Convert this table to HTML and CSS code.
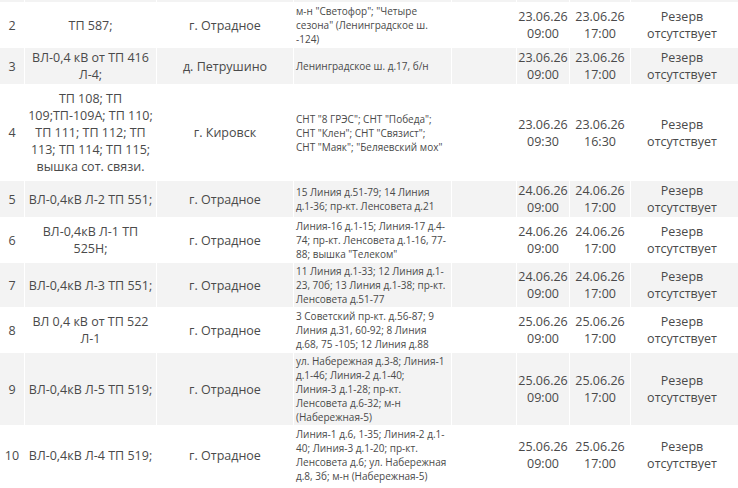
FILE: index.html
```html
<!DOCTYPE html>
<html lang="ru">
<head>
<meta charset="utf-8">
<link rel="stylesheet" href="styles.css">
</head>
<body>
<table class="grid">
  <colgroup>
    <col class="c-num"><col class="c-obj"><col class="c-loc"><col class="c-addr"><col class="c-empty"><col class="c-start"><col class="c-end"><col class="c-res">
  </colgroup>
  <tbody>
    <tr class="odd strip"><td></td><td></td><td></td><td></td><td></td><td></td><td></td><td></td></tr>
    <tr class="even">
      <td class="num">2</td>
      <td class="obj">ТП 587;</td>
      <td class="loc">г. Отрадное</td>
      <td class="addr">м-н "Светофор"; "Четыре<br>сезона" (Ленинградское ш.<br>-124)</td>
      <td></td>
      <td class="date">23.06.26<br>09:00</td>
      <td class="date">23.06.26<br>17:00</td>
      <td class="res">Резерв<br>отсутствует</td>
    </tr>
    <tr class="odd">
      <td class="num">3</td>
      <td class="obj">ВЛ-0,4 кВ от ТП 416<br>Л-4;</td>
      <td class="loc">д. Петрушино</td>
      <td class="addr">Ленинградское ш. д.17, б/н</td>
      <td></td>
      <td class="date">23.06.26<br>09:00</td>
      <td class="date">23.06.26<br>17:00</td>
      <td class="res">Резерв<br>отсутствует</td>
    </tr>
    <tr class="even tall">
      <td class="num">4</td>
      <td class="obj">ТП 108; ТП<br>109;ТП-109А; ТП 110;<br>ТП 111; ТП 112; ТП<br>113; ТП 114; ТП 115;<br>вышка сот. связи.</td>
      <td class="loc">г. Кировск</td>
      <td class="addr">СНТ "8 ГРЭС"; СНТ "Победа";<br>СНТ "Клен"; СНТ "Связист";<br>СНТ "Маяк"; "Беляевский мох"</td>
      <td></td>
      <td class="date">23.06.26<br>09:30</td>
      <td class="date">23.06.26<br>16:30</td>
      <td class="res">Резерв<br>отсутствует</td>
    </tr>
    <tr class="odd">
      <td class="num">5</td>
      <td class="obj">ВЛ-0,4кВ Л-2 ТП 551;</td>
      <td class="loc">г. Отрадное</td>
      <td class="addr">15 Линия д.51-79; 14 Линия<br>д.1-36; пр-кт. Ленсовета д.21</td>
      <td></td>
      <td class="date">24.06.26<br>09:00</td>
      <td class="date">24.06.26<br>17:00</td>
      <td class="res">Резерв<br>отсутствует</td>
    </tr>
    <tr class="even">
      <td class="num">6</td>
      <td class="obj">ВЛ-0,4кВ Л-1 ТП<br>525Н;</td>
      <td class="loc">г. Отрадное</td>
      <td class="addr">Линия-16 д.1-15; Линия-17 д.4-<br>74; пр-кт. Ленсовета д.1-16, 77-<br>88; вышка "Телеком"</td>
      <td></td>
      <td class="date">24.06.26<br>09:00</td>
      <td class="date">24.06.26<br>17:00</td>
      <td class="res">Резерв<br>отсутствует</td>
    </tr>
    <tr class="odd">
      <td class="num">7</td>
      <td class="obj">ВЛ-0,4кВ Л-3 ТП 551;</td>
      <td class="loc">г. Отрадное</td>
      <td class="addr">11 Линия д.1-33; 12 Линия д.1-<br>23, 70б; 13 Линия д.1-38; пр-кт.<br>Ленсовета д.51-77</td>
      <td></td>
      <td class="date">24.06.26<br>09:00</td>
      <td class="date">24.06.26<br>17:00</td>
      <td class="res">Резерв<br>отсутствует</td>
    </tr>
    <tr class="even">
      <td class="num">8</td>
      <td class="obj">ВЛ 0,4 кВ от ТП 522<br>Л-1</td>
      <td class="loc">г. Отрадное</td>
      <td class="addr">3 Советский пр-кт. д.56-87; 9<br>Линия д.31, 60-92; 8 Линия<br>д.68, 75 -105; 12 Линия д.88</td>
      <td></td>
      <td class="date">25.06.26<br>09:00</td>
      <td class="date">25.06.26<br>17:00</td>
      <td class="res">Резерв<br>отсутствует</td>
    </tr>
    <tr class="odd">
      <td class="num">9</td>
      <td class="obj">ВЛ-0,4кВ Л-5 ТП 519;</td>
      <td class="loc">г. Отрадное</td>
      <td class="addr">ул. Набережная д.3-8; Линия-1<br>д.1-46; Линия-2 д.1-40;<br>Линия-3 д.1-28; пр-кт.<br>Ленсовета д.6-32; м-н<br>(Набережная-5)</td>
      <td></td>
      <td class="date">25.06.26<br>09:00</td>
      <td class="date">25.06.26<br>17:00</td>
      <td class="res">Резерв<br>отсутствует</td>
    </tr>
    <tr class="even">
      <td class="num">10</td>
      <td class="obj">ВЛ-0,4кВ Л-4 ТП 519;</td>
      <td class="loc">г. Отрадное</td>
      <td class="addr">Линия-1 д.6, 1-35; Линия-2 д.1-<br>40; Линия-3 д.1-20; пр-кт.<br>Ленсовета д.6; ул. Набережная<br>д.8, 3б; м-н (Набережная-5)</td>
      <td></td>
      <td class="date">25.06.26<br>09:00</td>
      <td class="date">25.06.26<br>17:00</td>
      <td class="res">Резерв<br>отсутствует</td>
    </tr>
  </tbody>
</table>
</body>
</html>
```
FILE: styles.css
```css
html, body {
  margin: 0;
  padding: 0;
  background: #ffffff;
}
body {
  font-family: "Open Sans", "Noto Sans", "DejaVu Sans", sans-serif;
  color: #4a4a4a;
  overflow: hidden;
}
.grid {
  table-layout: fixed;
  border-collapse: separate;
  border-spacing: 1px;
  margin: -1px 0 0 -1px;
  width: 746px;
}
.c-num { width: 24px; }
.c-obj { width: 131px; }
.c-loc { width: 136px; }
.c-addr { width: 157px; }
.c-empty { width: 64px; }
.c-start { width: 52px; }
.c-end { width: 60px; }
.c-res { width: 114px; }

.grid td {
  padding: 1px 0;
  font-size: 12.5px;
  line-height: 17px;
  text-align: center;
  vertical-align: middle;
  white-space: nowrap;
  overflow: hidden;
}
.odd td { background: #f3f3f3; }
.even td { background: #ffffff; }
.strip td { height: 2px; padding: 0; line-height: 2px; }
.tall td { padding: 5px 0; }

.grid td.addr {
  text-align: left;
  font-size: 10px;
  line-height: 14px;
  padding-left: 2px;
}
.grid td.res { padding-right: 12px; }
```
